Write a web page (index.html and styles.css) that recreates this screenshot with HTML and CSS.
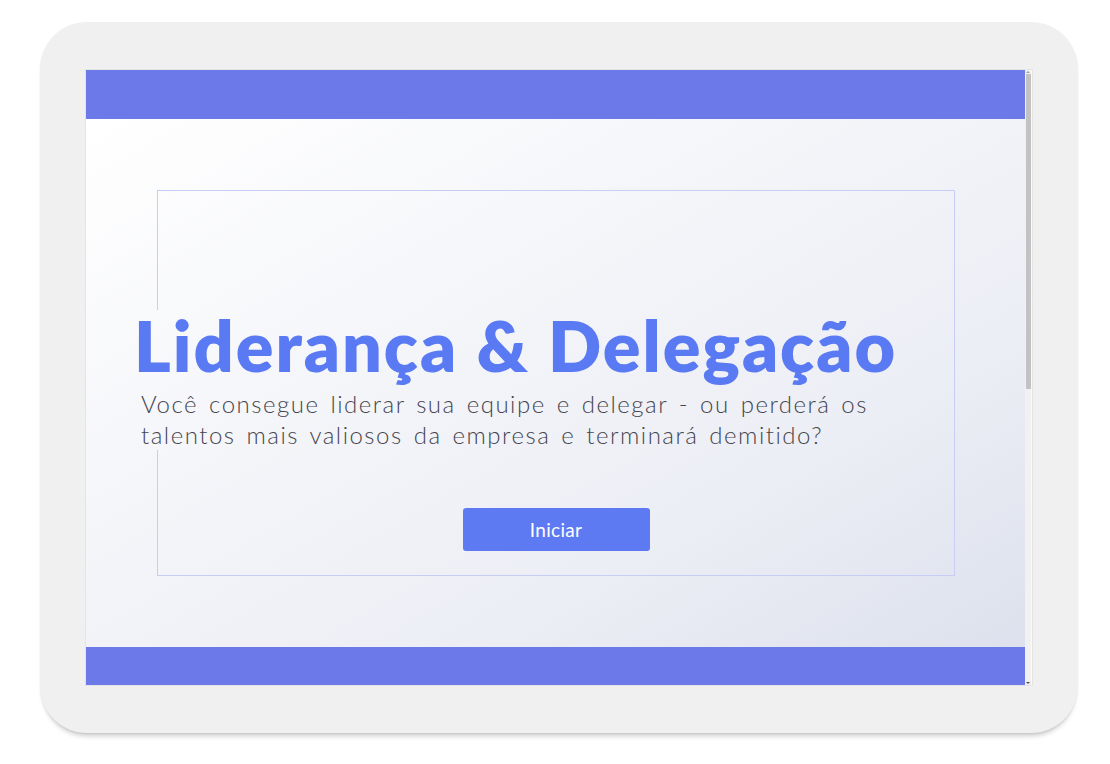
FILE: index.html
```html
<!DOCTYPE html>
<html lang="pt-BR">
<head>
<meta charset="utf-8">
<title>Liderança &amp; Delegação</title>
<link rel="stylesheet" href="styles.css">
</head>
<body>
<div class="device">
  <div class="screen">
    <div class="main">
      <div class="bar bar-top"></div>
      <div class="content">
        <div class="panel">
          <div class="intro">
            <h1 class="title">Liderança &amp; Delegação</h1>
            <p class="subtitle">Você consegue liderar sua equipe e delegar - ou perderá os<br>talentos mais valiosos da empresa e terminará demitido?</p>
          </div>
          <button class="start" type="button">Iniciar</button>
        </div>
      </div>
      <div class="bar bar-bottom"></div>
    </div>
    <div class="scrollbar">
      <span class="arrow arrow-up"></span>
      <span class="thumb"></span>
      <span class="arrow arrow-down"></span>
    </div>
  </div>
</div>
</body>
</html>
```

FILE: styles.css
```css
* { box-sizing: border-box; }

html, body {
  margin: 0;
  padding: 0;
  background: #ffffff;
}

body {
  width: 1110px;
  height: 764px;
  overflow: hidden;
  font-family: "Lato", "Liberation Sans", sans-serif;
}

.device {
  margin: 22px 0 0 40px;
  width: 1038px;
  height: 711px;
  padding: 48px 0 0 46px;
  background: #f0f0f0;
  border-radius: 47px;
  box-shadow: 0 6px 5px -3px rgba(0, 0, 0, 0.2), 0 1px 2px rgba(0, 0, 0, 0.06);
}

.screen {
  display: flex;
  width: 946px;
  height: 615px;
  background: #ffffff;
  box-shadow: 0 0 0 1px #e4e4e4;
}

.main {
  display: flex;
  flex-direction: column;
  width: 939px;
  height: 100%;
}

.bar {
  background: #6b79e9;
  flex: none;
}
.bar-top { height: 49px; }
.bar-bottom { height: 38px; }

.content,
.intro {
  background-image: linear-gradient(150deg, #ffffff 0%, #f4f5f9 40%, #eceef5 70%, #dde1ed 100%);
  background-attachment: fixed;
  background-size: 939px 528px;
  background-position: 86px 119px;
  background-repeat: no-repeat;
}

.content {
  flex: 1;
  padding: 71px 70px 71px 71px;
}

.panel {
  height: 100%;
  border: 1px solid #c7cdf4;
  padding-top: 119px;
  display: flex;
  flex-direction: column;
  align-items: center;
}

.intro {
  align-self: flex-start;
  margin-left: -24px;
  width: fit-content;
}

.title {
  margin: 0;
  font-size: 70px;
  line-height: 70px;
  font-weight: 800;
  color: #5a7af4;
  letter-spacing: 2px;
  white-space: nowrap;
}

.subtitle {
  margin: 8px 0 0 7px;
  font-size: 24px;
  line-height: 31px;
  font-weight: 300;
  color: #45454f;
  letter-spacing: 1.5px;
  word-spacing: 3px;
  white-space: nowrap;
}

.start {
  margin-top: 58px;
  width: 187px;
  height: 43px;
  border: none;
  border-radius: 3px;
  background: #5e7af3;
  color: #ffffff;
  font-family: "Lato", "Liberation Sans", sans-serif;
  font-size: 19px;
  font-weight: 400;
  letter-spacing: 0.3px;
  padding: 0;
}

.scrollbar {
  width: 7px;
  height: 100%;
  background: #f1f1f1;
  display: flex;
  flex-direction: column;
  align-items: center;
  border-right: 1px solid #fafafa;
}

.arrow {
  width: 0;
  height: 0;
  border-left: 2px solid transparent;
  border-right: 2px solid transparent;
  margin: 1px 0;
}
.arrow-up { border-bottom: 2px solid #a0a0a0; }
.arrow-down { border-top: 2px solid #505050; margin-top: auto; }

.thumb {
  width: 5px;
  height: 315px;
  background: #c2c2c2;
}
```
